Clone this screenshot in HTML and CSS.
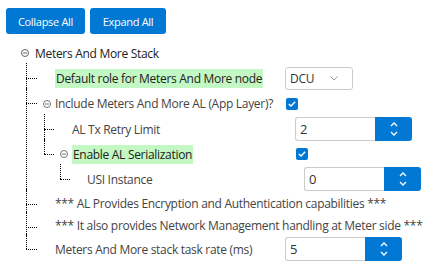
FILE: index.html
```html
<!DOCTYPE html>
<html lang="en">
<head>
    <meta charset="UTF-8">
    <title>Meters And More Stack</title>
    <link rel="stylesheet" href="styles.css">
</head>
<body>
    <div class="toolbar">
        <button class="btn collapse">Collapse All</button>
        <button class="btn expand">Expand All</button>
    </div>

    <ul class="tree">
        <li class="root">
            <div class="row">
                <span class="toggle"><svg width="8" height="8" viewBox="0 0 8 8"><circle cx="4" cy="4" r="3.5" fill="none" stroke="#666" stroke-width="1"/><path d="M2 4h4" stroke="#666" stroke-width="1"/></svg></span>
                <span class="label root-label">Meters And More Stack</span>
            </div>
            <ul class="children lvl1">
                <li>
                    <div class="row">
                        <span class="slot"></span>
                        <span class="cell"><span class="label hl">Default role for Meters And More node</span></span>
                        <div class="select">
                            <span>DCU</span>
                            <svg width="8" height="5" viewBox="0 0 8 5"><path d="M0.5 0.5L4 4L7.5 0.5" fill="none" stroke="#999" stroke-width="1"/></svg>
                        </div>
                    </div>
                </li>
                <li>
                    <div class="row tall">
                        <span class="slot"><svg width="8" height="8" viewBox="0 0 8 8"><circle cx="4" cy="4" r="3.5" fill="none" stroke="#777" stroke-width="1"/><path d="M2 4h4" stroke="#777" stroke-width="1"/></svg></span>
                        <span class="cell"><span class="label">Include Meters And More AL (App Layer)?</span></span>
                        <span class="check"><svg width="8" height="6" viewBox="0 0 8 6"><path d="M0.8 3L3 5L7.2 0.8" fill="none" stroke="#fff" stroke-width="1.4"/></svg></span>
                    </div>
                    <ul class="children lvl2">
                        <li>
                            <div class="row">
                                <span class="slot"></span>
                                <span class="cell"><span class="label">AL Tx Retry Limit</span></span>
                                <div class="spinner">
                                    <span class="value">2</span>
                                    <span class="spin">
                                        <svg width="8" height="5" viewBox="0 0 8 5"><path d="M1 4L4 1L7 4" fill="none" stroke="#fff" stroke-width="1.3"/></svg>
                                        <svg width="8" height="5" viewBox="0 0 8 5"><path d="M1 1L4 4L7 1" fill="none" stroke="#fff" stroke-width="1.3"/></svg>
                                    </span>
                                </div>
                            </div>
                        </li>
                        <li>
                            <div class="row">
                                <span class="slot"><svg width="8" height="8" viewBox="0 0 8 8"><circle cx="4" cy="4" r="3.5" fill="none" stroke="#777" stroke-width="1"/><path d="M2 4h4" stroke="#777" stroke-width="1"/></svg></span>
                                <span class="cell"><span class="label hl">Enable AL Serialization</span></span>
                                <span class="check"><svg width="8" height="6" viewBox="0 0 8 6"><path d="M0.8 3L3 5L7.2 0.8" fill="none" stroke="#fff" stroke-width="1.4"/></svg></span>
                            </div>
                            <ul class="children lvl3">
                                <li>
                                    <div class="row">
                                        <span class="slot"></span>
                                        <span class="cell"><span class="label">USI Instance</span></span>
                                        <div class="spinner">
                                            <span class="value">0</span>
                                            <span class="spin">
                                                <svg width="8" height="5" viewBox="0 0 8 5"><path d="M1 4L4 1L7 4" fill="none" stroke="#fff" stroke-width="1.3"/></svg>
                                                <svg width="8" height="5" viewBox="0 0 8 5"><path d="M1 1L4 4L7 1" fill="none" stroke="#fff" stroke-width="1.3"/></svg>
                                            </span>
                                        </div>
                                    </div>
                                </li>
                            </ul>
                        </li>
                    </ul>
                </li>
                <li>
                    <div class="row text">
                        <span class="slot"></span>
                        <span class="label">*** AL Provides Encryption and Authentication capabilities ***</span>
                    </div>
                </li>
                <li>
                    <div class="row text short">
                        <span class="slot"></span>
                        <span class="label">*** It also provides Network Management handling at Meter side ***</span>
                    </div>
                </li>
                <li>
                    <div class="row">
                        <span class="slot"></span>
                        <span class="cell"><span class="label">Meters And More stack task rate (ms)</span></span>
                        <div class="spinner">
                            <span class="value">5</span>
                            <span class="spin">
                                <svg width="8" height="5" viewBox="0 0 8 5"><path d="M1 4L4 1L7 4" fill="none" stroke="#fff" stroke-width="1.3"/></svg>
                                <svg width="8" height="5" viewBox="0 0 8 5"><path d="M1 1L4 4L7 1" fill="none" stroke="#fff" stroke-width="1.3"/></svg>
                            </span>
                        </div>
                    </div>
                </li>
            </ul>
        </li>
    </ul>
</body>
</html>
```

FILE: styles.css
```css
body {
    margin: 0;
    padding: 8px 6px;
    font-family: "Open Sans", "Noto Sans", sans-serif;
    font-size: 12px;
    letter-spacing: -0.3px;
    color: #444;
    background-color: #fff;
}
.toolbar {
    display: flex;
    gap: 5px;
    margin-bottom: 7px;
}
.btn {
    height: 26px;
    padding: 0;
    border: none;
    border-radius: 3px;
    background-color: #0078d4;
    color: #fff;
    font-family: inherit;
    font-size: 11px;
    letter-spacing: -0.3px;
    white-space: nowrap;
    cursor: pointer;
}
.btn.collapse {
    width: 79px;
}
.btn.expand {
    width: 76px;
}
ul {
    list-style: none;
    margin: 0;
    padding: 0;
}
.tree {
    margin-left: 15px;
}
.row {
    display: flex;
    align-items: center;
    height: 24px;
    margin-bottom: 1px;
    white-space: nowrap;
}
.row.tall {
    height: 25px;
}
.row.text {
    height: 22px;
}
.row.text.short {
    height: 21px;
}
.toggle {
    display: flex;
    width: 14px;
}
.root-label {
    color: #222;
}
.cell {
    flex-shrink: 0;
}
.label.hl {
    background-color: #c3f7c3;
    color: #222;
    padding: 1px 1px;
    line-height: 16px;
}
.slot {
    display: flex;
    align-items: center;
    flex-shrink: 0;
    width: 18px;
    padding-left: 6px;
    box-sizing: border-box;
}
.children li {
    position: relative;
    padding-left: 11px;
}
/* vertical guide */
.children li::before {
    content: "";
    position: absolute;
    left: 0;
    top: -3px;
    bottom: 0;
    border-left: 1px dotted #000;
}
.children li:last-child::before {
    bottom: auto;
    height: 15px;
}
/* horizontal connector */
.children li::after {
    content: "";
    position: absolute;
    left: 0;
    top: 12px;
    width: 11px;
    border-top: 1px dotted #000;
}
.lvl1 {
    margin-left: 5px;
}
.lvl1 .cell {
    width: 230px;
}
.lvl2 {
    margin-left: 7px;
}
.lvl2 li {
    padding-left: 10px;
}
.lvl2 li::after {
    width: 10px;
}
.lvl2 .cell {
    width: 223px;
}
.lvl3 {
    margin-left: 6px;
}
.lvl3 li {
    padding-left: 10px;
}
.lvl3 li::after {
    width: 10px;
}
.lvl3 .slot {
    width: 17px;
}
.lvl3 .cell {
    width: 217px;
}
.select {
    display: flex;
    align-items: center;
    justify-content: space-between;
    flex-shrink: 0;
    width: 68px;
    height: 23px;
    box-sizing: border-box;
    padding: 0 14px 0 4px;
    border: 1px solid #ccc;
    border-radius: 3px;
    color: #333;
}
.check {
    display: flex;
    align-items: center;
    justify-content: center;
    flex-shrink: 0;
    width: 12px;
    height: 12px;
    margin-left: 1px;
    border-radius: 2px;
    background-color: #0078d4;
}
.spinner {
    display: flex;
    flex-shrink: 0;
    height: 24px;
}
.spinner .value {
    display: flex;
    align-items: center;
    width: 80px;
    box-sizing: border-box;
    padding-left: 4px;
    border: 1px solid #ccc;
    border-right: none;
    border-radius: 3px 0 0 3px;
    color: #333;
    font-size: 13px;
}
.spin {
    display: flex;
    flex-direction: column;
    align-items: center;
    justify-content: center;
    gap: 4px;
    width: 37px;
    border-radius: 0 3px 3px 0;
    background-color: #0078d4;
}
```
